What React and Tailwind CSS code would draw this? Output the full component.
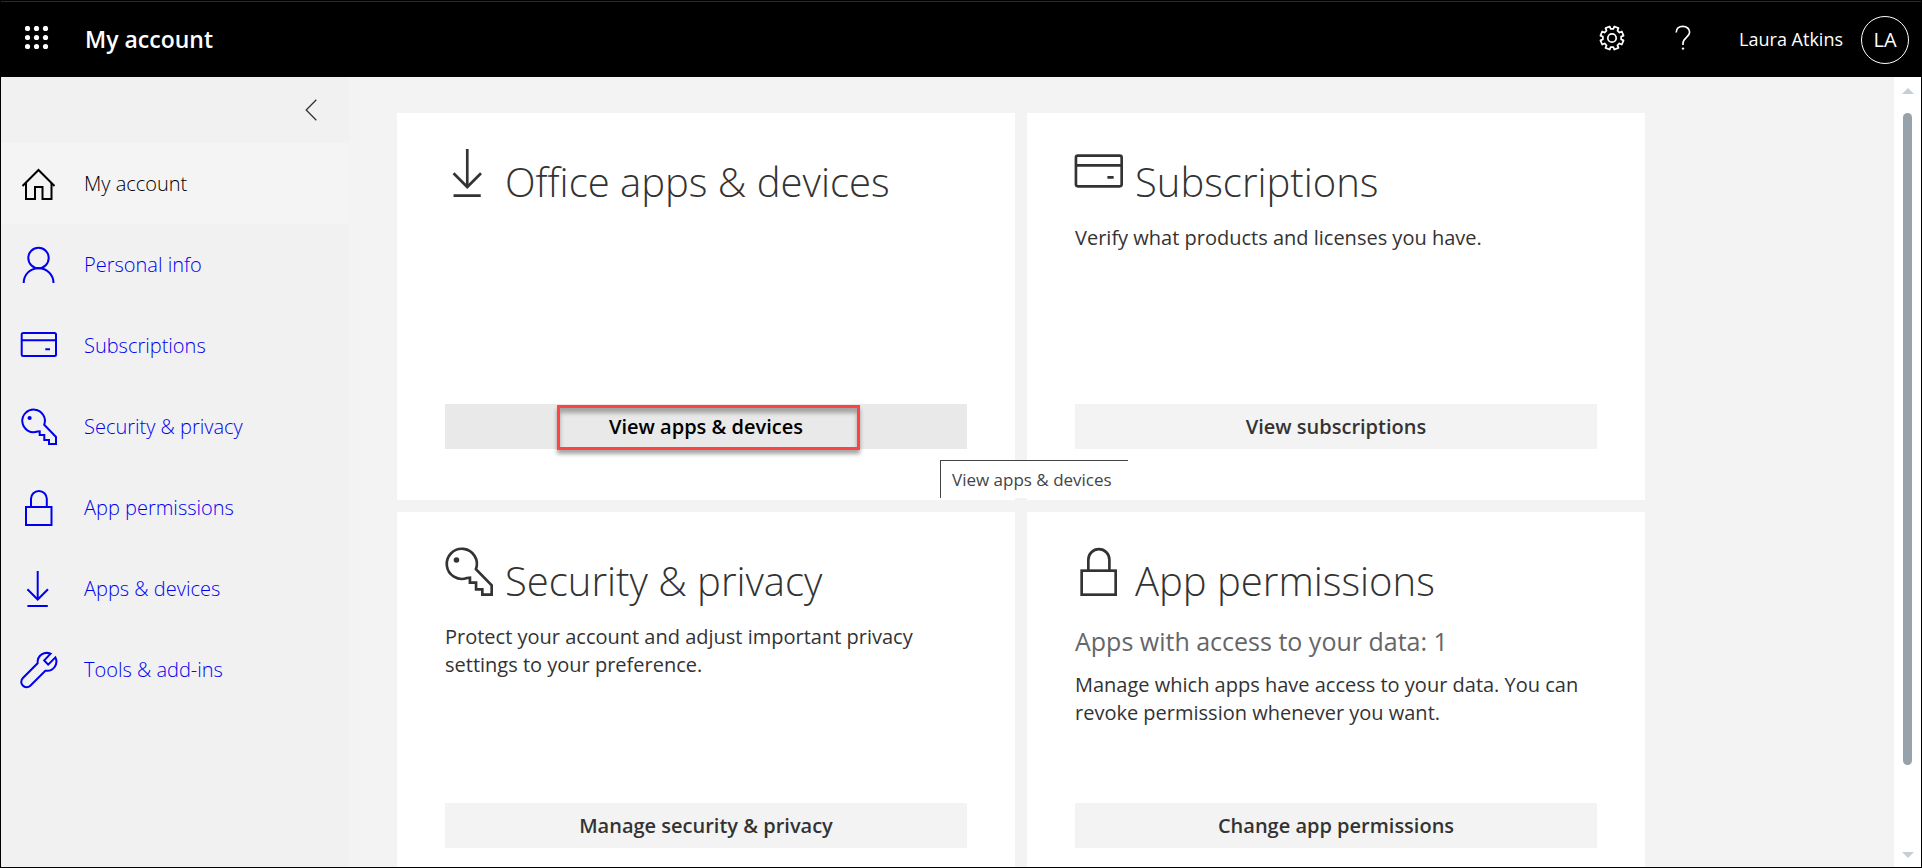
import React from "react";

const ICONS = {
  home: (
    <>
      <path d="M1.5 20 17.5 4 33.5 20" />
      <path d="M5 17V33H14V21H21.5V33H30.5V17" />
    </>
  ),
  person: (
    <>
      <circle cx="17.5" cy="11" r="10.2" />
      <path d="M2.7 36C2.7 27.5 9.2 21.2 17.5 21.2S32.5 27.5 32.5 36" />
    </>
  ),
  card: (
    <>
      <rect x="0.7" y="5" width="34.3" height="23" rx="1.5" />
      <path d="M0.7 12.3H35M24.3 21.3H29" />
    </>
  ),
  key: (
    <>
      <path d="M18.7 22.3V26H23.3V31H28V35H35V28L23.2 15.8A11.3 11.3 0 1 0 16.5 22.5Z" />
      <circle cx="8.6" cy="9" r="2.1" fill="currentColor" stroke="none" />
    </>
  ),
  lock: (
    <>
      <rect x="5" y="17" width="25.5" height="18" />
      <path d="M10 17V8.8A7.9 7.9 0 0 1 25.8 8.8V17" />
    </>
  ),
  download: (
    <>
      <path d="M16.7 0V28" />
      <path d="M6.4 18.2 16.7 28.5 27 18.2M6.4 35H26.8" />
    </>
  ),
  wrench: (
    <path d="M29.6 1.7C23.5 -0.8 16.2 3 16.6 11.3L1.9 26A5.2 5.2 0 0 0 9.3 33.7L24.3 18.7C32.5 20 37.6 12 34.4 5.4L27.2 12.6 23.2 8.4Z" />
  ),
};

function Icon({ name, className }) {
  return (
    <svg
      viewBox="0 0 36 36"
      className={className}
      fill="none"
      stroke="currentColor"
      strokeWidth="2"
      overflow="visible"
      aria-hidden="true"
    >
      {ICONS[name]}
    </svg>
  );
}

// Eight blunt teeth, with a notch on each axis.
const GEAR = (() => {
  const point = (radius, degrees) => {
    const a = (degrees * Math.PI) / 180;
    return `${(13 + radius * Math.cos(a)).toFixed(2)} ${(13 + radius * Math.sin(a)).toFixed(2)}`;
  };
  const points = [];
  for (let i = 0; i < 8; i += 1) {
    const c = 22.5 + i * 45;
    points.push(point(9.2, c - 14), point(11.8, c - 11), point(11.8, c + 11), point(9.2, c + 14));
  }
  return `M${points.join("L")}Z`;
})();

const NAV = [
  { icon: "home", label: "My account", current: true },
  { icon: "person", label: "Personal info" },
  { icon: "card", label: "Subscriptions" },
  { icon: "key", label: "Security & privacy" },
  { icon: "lock", label: "App permissions" },
  { icon: "download", label: "Apps & devices" },
  { icon: "wrench", label: "Tools & add-ins" },
];

function Header() {
  return (
    <header className="flex h-[76px] shrink-0 items-center border-t border-[#2b2b2b] bg-black pr-3 text-white">
      <button type="button" aria-label="App launcher" className="ml-6 mb-1">
        <svg viewBox="0 0 24 24" className="size-6" fill="currentColor" aria-hidden="true">
          {[3, 12, 21].map((y) => [3, 12, 21].map((x) => <circle key={`${x}-${y}`} cx={x - 0.5} cy={y - 0.5} r="2.6" />))}
        </svg>
      </button>
      <h1 className="ml-9 text-[23px] font-semibold">My account</h1>
      <div className="ml-auto flex items-center">
        <button type="button" aria-label="Settings" className="mb-1">
          <svg viewBox="0 0 26 26" className="size-[26px]" fill="none" stroke="currentColor" strokeWidth="1.7" strokeLinejoin="round" aria-hidden="true">
            <path d={GEAR} />
            <circle cx="13" cy="13" r="4.2" />
          </svg>
        </button>
        <button type="button" aria-label="Help" className="mb-1 ml-[50px]">
          <svg viewBox="0 0 16 26" className="h-[26px] w-4" fill="none" stroke="currentColor" strokeWidth="1.7" aria-hidden="true">
            <path d="M1.2 7.5C1.2 3.6 4 1.4 7.8 1.4S14.6 3.8 14.6 7.2C14.6 12.2 8 12.6 8 18.4V20" />
            <circle cx="8" cy="23.6" r="1.2" fill="currentColor" stroke="none" />
          </svg>
        </button>
        <button type="button" className="ml-12 flex items-center gap-[18px] text-[18px]">
          <span>Laura Atkins</span>
          <span className="flex size-12 items-center justify-center rounded-full border border-white text-[20px]">LA</span>
        </button>
      </div>
    </header>
  );
}

function Sidebar() {
  return (
    <nav className="w-[348px] shrink-0 bg-[#f1f1f1]">
      <div className="flex h-[66px] items-center justify-end pr-8">
        <button type="button" aria-label="Collapse navigation" className="text-[#333]">
          <svg viewBox="0 0 12 22" className="h-[22px] w-3" fill="none" stroke="currentColor" strokeWidth="1.3" aria-hidden="true">
            <path d="M11.3 0.8 1.2 11 11.3 21.2" />
          </svg>
        </button>
      </div>
      <ul>
        {NAV.map(({ icon, label, current }) => (
          <li key={label}>
            <a
              href="#"
              aria-current={current ? "page" : undefined}
              className={
                current
                  ? "flex h-[81px] items-center gap-[27px] bg-[#f4f4f4] pl-5 text-[20px] font-light text-black"
                  : "flex h-[81px] items-center gap-[27px] pl-5 text-[20px] font-light text-[#0000f0]"
              }
            >
              <Icon name={icon} className="size-9 shrink-0" />
              {label}
            </a>
          </li>
        ))}
      </ul>
    </nav>
  );
}

function Card({ icon, title, children, action }) {
  return (
    <section className="flex min-h-[387px] flex-col bg-white px-12 pt-9 pb-[51px] text-[#333]">
      <div className="flex gap-3">
        <Icon name={icon} className="size-12 shrink-0" />
        <h2 className="pt-2 text-[40px] leading-[50px] font-light">{title}</h2>
      </div>
      <div className="pt-[17px] text-[20px] leading-7">{children}</div>
      <div className="mt-auto">{action}</div>
    </section>
  );
}

function ActionButton({ children }) {
  return (
    <button type="button" className="h-[45px] w-full bg-[#f3f3f3] text-[20px] font-semibold text-[#333]">
      {children}
    </button>
  );
}

function HoveredAction() {
  return (
    <div className="relative">
      <button
        type="button"
        aria-describedby="apps-tip"
        className="h-[45px] w-full bg-[#e9e9e9] text-[20px] font-semibold text-black"
      >
        View apps &amp; devices
      </button>
      <span className="pointer-events-none absolute top-px left-28 h-[45px] w-[303px] border-3 border-[#ff4343] shadow-[0_4px_4px_rgba(0,0,0,0.35),inset_0_5px_4px_rgba(0,0,0,0.3)]" />
      <div
        id="apps-tip"
        role="tooltip"
        className="absolute top-14 left-[495px] z-10 flex h-[38px] w-[188px] items-center border-t border-l border-[#444] bg-white pl-[11px] text-[17px] whitespace-nowrap text-[#444]"
      >
        View apps &amp; devices
      </div>
    </div>
  );
}

function ScrollBar() {
  return (
    <div className="flex w-[27px] shrink-0 flex-col items-center bg-white pt-[11px] pb-[9px]" aria-hidden="true">
      <svg viewBox="0 0 12 6" className="h-1.5 w-3" fill="#c8cfd4">
        <path d="M0 6 6 0 12 6Z" />
      </svg>
      <div className="w-full flex-1 px-[9px] pt-[19px] pb-[87px]">
        <div className="h-full rounded-full bg-[#98a2aa]" />
      </div>
      <svg viewBox="0 0 12 6" className="h-1.5 w-3" fill="#c8cfd4">
        <path d="M0 0 6 6 12 0Z" />
      </svg>
    </div>
  );
}

export default function App() {
  return (
    <div className="flex h-screen flex-col overflow-hidden border border-black bg-[#f3f3f3] font-['Open_Sans','Noto_Sans',sans-serif]">
      <Header />
      <div className="flex min-h-0 flex-1">
        <Sidebar />
        <main className="min-w-0 flex-1 overflow-hidden px-12 pt-9">
          <div className="grid max-w-[1248px] grid-cols-2 gap-3">
            <Card icon="download" title="Office apps & devices" action={<HoveredAction />} />
            <Card icon="card" title="Subscriptions" action={<ActionButton>View subscriptions</ActionButton>}>
              <p>Verify what products and licenses you have.</p>
            </Card>
            <Card icon="key" title="Security & privacy" action={<ActionButton>Manage security &amp; privacy</ActionButton>}>
              <p>Protect your account and adjust important privacy settings to your preference.</p>
            </Card>
            <Card icon="lock" title="App permissions" action={<ActionButton>Change app permissions</ActionButton>}>
              <p className="mb-4 pt-1 text-[25px] leading-7 text-[#666]">Apps with access to your data: 1</p>
              <p>Manage which apps have access to your data. You can revoke permission whenever you want.</p>
            </Card>
          </div>
        </main>
        <ScrollBar />
      </div>
    </div>
  );
}
